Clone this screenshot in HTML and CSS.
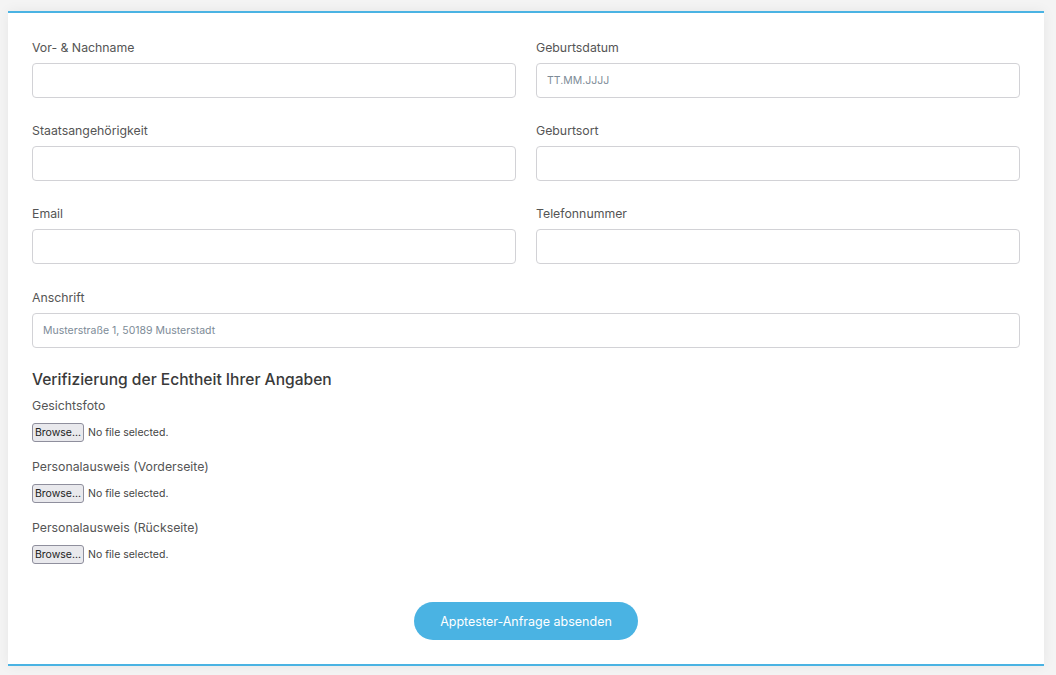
FILE: index.html
```html
<!DOCTYPE html>
<html lang="de">
<head>
<meta charset="utf-8">
<title>Apptester-Anfrage</title>
<link rel="stylesheet" href="styles.css">
</head>
<body>
<main class="card">
  <form class="form">
    <div class="grid">
      <div class="field">
        <label class="label">Vor- &amp; Nachname</label>
        <div class="input"></div>
      </div>
      <div class="field">
        <label class="label">Geburtsdatum</label>
        <div class="input"><span class="ph">TT.MM.JJJJ</span></div>
      </div>
      <div class="field">
        <label class="label">Staatsangehörigkeit</label>
        <div class="input"></div>
      </div>
      <div class="field">
        <label class="label">Geburtsort</label>
        <div class="input"></div>
      </div>
      <div class="field">
        <label class="label">Email</label>
        <div class="input"></div>
      </div>
      <div class="field">
        <label class="label">Telefonnummer</label>
        <div class="input"></div>
      </div>
      <div class="field full">
        <label class="label">Anschrift</label>
        <div class="input"><span class="ph">Musterstraße 1, 50189 Musterstadt</span></div>
      </div>
    </div>

    <h3 class="heading">Verifizierung der Echtheit Ihrer Angaben</h3>

    <div class="upload">
      <div class="label">Gesichtsfoto</div>
      <div class="file"><span class="browse">Browse...</span><span class="nofile">No file selected.</span></div>
    </div>
    <div class="upload">
      <div class="label">Personalausweis (Vorderseite)</div>
      <div class="file"><span class="browse">Browse...</span><span class="nofile">No file selected.</span></div>
    </div>
    <div class="upload">
      <div class="label">Personalausweis (Rückseite)</div>
      <div class="file"><span class="browse">Browse...</span><span class="nofile">No file selected.</span></div>
    </div>

    <div class="actions">
      <span class="submit">Apptester-Anfrage absenden</span>
    </div>
  </form>
</main>
</body>
</html>
```
FILE: styles.css
```css
html, body {
  margin: 0;
  padding: 0;
  background: #f4f4f4;
  font-family: Inter, "Noto Sans", sans-serif;
  color: #555;
}
body {
  padding: 11px 12px 10px 8px;
}
.card {
  background: #fff;
  border-top: 2px solid #4ab3e3;
  border-bottom: 2px solid #4ab3e3;
  box-shadow: 0 0 12px rgba(0,0,0,0.06);
  padding: 27px 24px 24px 24px;
}
.grid {
  display: grid;
  grid-template-columns: 1fr 1fr;
  column-gap: 20px;
  row-gap: 25px;
}
.full {
  grid-column: 1 / -1;
  margin-top: 1px;
}
.field {
  display: flex;
  flex-direction: column;
}
.label {
  display: block;
  font-size: 12.3px;
  line-height: 16px;
  color: #555;
}
.field .label {
  margin-bottom: 7px;
}
.input {
  height: 35px;
  box-sizing: border-box;
  border: 1px solid #d2d2d6;
  border-radius: 4px;
  display: flex;
  align-items: center;
  padding: 0 10px;
}
.ph {
  font-size: 10.5px;
  color: #7d8b97;
}
.heading {
  margin: 21px 0 7px 0;
  font-size: 15.6px;
  line-height: 22px;
  font-weight: 500;
  color: #3a3a3a;
}
.upload {
  margin-bottom: 17px;
}
.upload .label {
  margin-bottom: 9px;
}
.file {
  display: flex;
  align-items: center;
  height: 19px;
}
.browse {
  box-sizing: border-box;
  height: 19px;
  width: 52px;
  display: inline-flex;
  align-items: center;
  justify-content: center;
  background: #e9e9ed;
  border: 1px solid #8f8f9d;
  border-radius: 3px;
  font-size: 10.5px;
  color: #222;
}
.nofile {
  margin-left: 4px;
  font-size: 10.5px;
  color: #444;
}
.actions {
  display: flex;
  justify-content: center;
  margin-top: 38px;
}
.submit {
  width: 224px;
  height: 38px;
  border-radius: 19px;
  background: #4ab3e3;
  color: #fff;
  font-size: 12.5px;
  display: flex;
  align-items: center;
  justify-content: center;
}
```
